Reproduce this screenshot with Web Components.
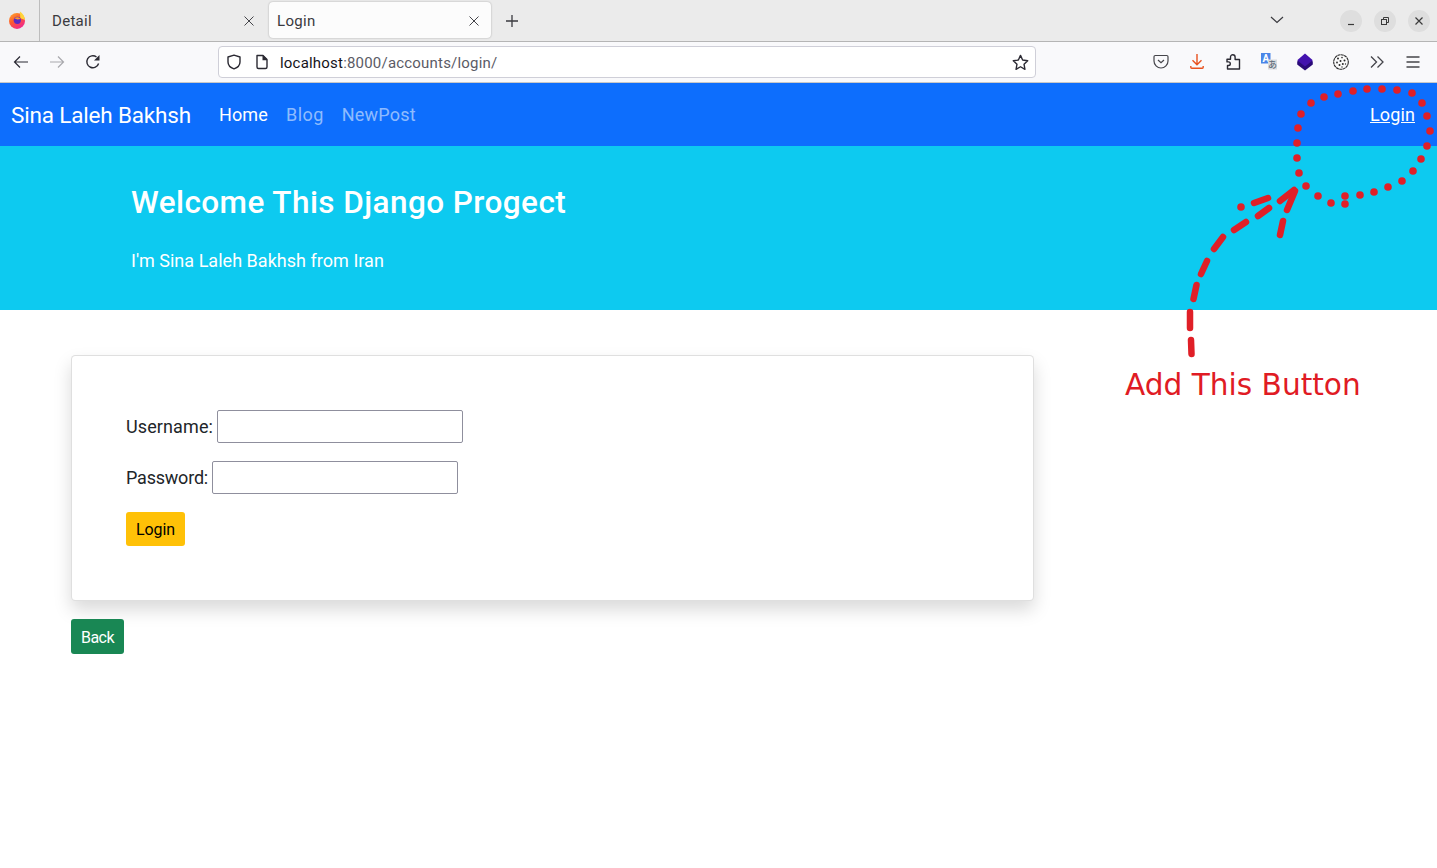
<!doctype html>
<html lang="en">
<head>
<meta charset="utf-8">
<title>Login</title>
<style>
  html, body { margin: 0; padding: 0; background: #fff; }
  body { font-family: Roboto, "Noto Sans", sans-serif; color: #212529; }
</style>
</head>
<body>
<login-app></login-app>

<script>
// inline icons, all drawn on a 16x16 box
const ICONS = {
  back: '<path d="M15 8H1.5M7 2.5 1.5 8 7 13.5" fill="none" stroke="currentColor" stroke-width="1.2"/>',
  forward: '<path d="M1 8h13.5M9 2.5 14.5 8 9 13.5" fill="none" stroke="currentColor" stroke-width="1.2"/>',
  reload: '<path d="M13.6 9.5A6 6 0 1 1 11.5 3" fill="none" stroke="currentColor" stroke-width="1.4"/><path d="M14.5 1v5.5H9z" fill="currentColor"/>',
  shield: '<path d="M8 1.2 14 3v5c0 3.4-2.6 5.7-6 6.9C4.6 13.7 2 11.4 2 8V3z" fill="none" stroke="currentColor" stroke-width="1.4" stroke-linejoin="round"/>',
  page: '<path d="M3 1.5h6l4 4V13a1.5 1.5 0 0 1-1.5 1.5h-7A1.5 1.5 0 0 1 3 13z" fill="none" stroke="currentColor" stroke-width="1.4" stroke-linejoin="round"/><path d="M8.5 1.5h1L13 5v1.300H8.500z" fill="currentColor"/>',
  star: '<path d="m8 1.300 2 4.400 4.800.6-3.500 3.300.9 4.800L8 12l-4.200 2.400.9-4.800L1.200 6.300 6 5.700z" fill="none" stroke="currentColor" stroke-width="1.3" stroke-linejoin="round"/>',
  pocket: '<path d="M2.300 1.500h11.400c.7 0 1.300.6 1.300 1.300V7A7 7 0 0 1 1 7V2.800c0-.7.600-1.300 1.300-1.300z" fill="none" stroke="#45454a" stroke-width="1.200"/><path d="M5 6l3 2.800L11 6" fill="none" stroke="#45454a" stroke-width="1.200"/>',
  download: '<path d="M8 0v10.500M3.500 6.200 8 10.700l4.500-4.500" fill="none" stroke="#e8521f" stroke-width="1.400"/><path d="M1.800 12v1.300c0 .5.400.9.900.9h10.600c.5 0 .9-.4.900-.9V12" fill="none" stroke="#e8521f" stroke-width="1.400"/>',
  puzzle: '<path d="M2 5.200h3.500V3a2.300 2.300 0 0 1 4.600 0v2.500h4.400V15H2.500v-3.500h1a1.800 1.800 0 0 0 0-3.600H2z" fill="none" stroke="currentColor" stroke-width="1.400" stroke-linejoin="round"/>',
  translate: '<rect x="0" y="-1" width="9.500" height="10.500" fill="#4a86e8"/><text x="4.750" y="7.800" font-family="Roboto, sans-serif" font-size="10" font-weight="700" fill="#fff" text-anchor="middle">A</text><rect x="7" y="5.500" width="9" height="10" fill="#d9dcdf"/><text x="11.500" y="14" font-family="\'Noto Sans CJK JP\', sans-serif" font-size="9" fill="#4a5a6a" text-anchor="middle">あ</text>',
  layers: '<path d="M.2 7.500 8 2 15.800 7.500v3L8 16.500.2 10.500z" fill="#2a0a78"/><path d="M8 -.5 15.800 6.300 8 12.500 .2 6.300z" fill="#4312ae"/>',
  cookie: '<circle cx="8" cy="8" r="7.300" fill="#fbfbfb" stroke="#2a2a2a" stroke-width="1.100" stroke-dasharray="3 .4"/><g fill="#2a2a2a"><circle cx="5" cy="4.500" r="1"/><circle cx="9" cy="3.600" r=".8"/><circle cx="11.500" cy="6.500" r="1"/><circle cx="7.500" cy="7" r="1"/><circle cx="4" cy="8.500" r=".9"/><circle cx="9.800" cy="10" r="1"/><circle cx="6.500" cy="11" r="1"/><circle cx="12.500" cy="10" r=".7"/><circle cx="9" cy="13" r=".7"/></g>',
  overflow: '<path d="M2 2.500 7.500 8 2 13.500M8.500 2.500 14 8l-5.500 5.500" fill="none" stroke="#45454a" stroke-width="1.300"/>',
  menu: '<path d="M1.500 3h13M1.500 8h13M1.500 13h13" fill="none" stroke="#45454a" stroke-width="1.300"/>',
  close: '<path d="M3.500 3.500l9 9M12.500 3.500l-9 9" fill="none" stroke="currentColor" stroke-width="1"/>',
  plus: '<path d="M8 2v12M2 8h12" fill="none" stroke="currentColor" stroke-width="1.300"/>',
  chevron: '<path d="M2 5l6 5.500L14 5" fill="none" stroke="currentColor" stroke-width="1.200"/>',
  firefox: '<defs><linearGradient id="fx" x1="0" y1="0" x2=".6" y2="1"><stop offset="0" stop-color="#ffb02e"/><stop offset=".5" stop-color="#ff5a2c"/><stop offset="1" stop-color="#f0288c"/></linearGradient></defs><circle cx="8" cy="8.800" r="7.100" fill="url(#fx)"/><path d="M10.500 .5c2.500 1.500 4.500 4 4.600 7.500L11 6.500z" fill="#ffd43a"/><circle cx="8.300" cy="8.300" r="3.200" fill="#5b2bc4"/><path d="M5.500 6.500c2-1.500 4.500-1 5.500.5l-2.500.5z" fill="#ff9a2c"/>'
};

class ToolIcon extends HTMLElement {
  constructor() {
    super();
    this.attachShadow({ mode: 'open' });
  }

  connectedCallback() {
    const size = this.getAttribute('size') || 16;
    this.shadowRoot.innerHTML = `
      <style>
        :host { display: flex; align-items: center; justify-content: center; color: inherit; flex: none; }
        svg { display: block; overflow: visible; }
      </style>
      <svg width="${size}" height="${size}" viewBox="0 0 16 16">${ICONS[this.getAttribute('name')]}</svg>
    `;
  }
}

class BrowserTab extends HTMLElement {
  constructor() {
    super();
    this.attachShadow({ mode: 'open' });
    this.shadowRoot.innerHTML = `
      <style>
        :host {
          display: flex;
          align-items: center;
          box-sizing: border-box;
          height: 36px;
          font-size: 15px;
          letter-spacing: .3px;
          color: #3a3a3f;
        }
        :host([selected]) {
          background: #fcfcfc;
          border-radius: 4px;
          box-shadow: 0 0 2px rgba(0,0,0,.3);
        }
        .label { flex: 1; }
        tool-icon { color: #45454a; }
      </style>
      <span class="label"><slot></slot></span>
      <tool-icon name="close"></tool-icon>
    `;
  }
}

class WindowButton extends HTMLElement {
  constructor() {
    super();
    this.attachShadow({ mode: 'open' });
    const kind = this.getAttribute('kind');
    const glyph = {
      min: '<path d="M3 9.500h6" stroke="currentColor" stroke-width="1.200"/>',
      max: '<path d="M4.500 4V2.500h5v5H8" fill="none" stroke="currentColor"/><rect x="2.500" y="4.500" width="5" height="5" fill="none" stroke="currentColor"/>',
      close: '<path d="M2.500 2.500l7 7M9.500 2.500l-7 7" stroke="currentColor" stroke-width="1.200"/>'
    }[kind];
    this.shadowRoot.innerHTML = `
      <style>
        :host {
          display: flex;
          align-items: center;
          justify-content: center;
          width: 22px;
          height: 22px;
          border-radius: 50%;
          background: #dedede;
          color: #3a3a3a;
        }
      </style>
      <svg width="12" height="12" viewBox="0 0 12 12">${glyph}</svg>
    `;
  }
}

class BrowserTabs extends HTMLElement {
  constructor() {
    super();
    this.attachShadow({ mode: 'open' });
    this.shadowRoot.innerHTML = `
      <style>
        :host {
          display: flex;
          align-items: center;
          box-sizing: border-box;
          height: 42px;
          background: #ebebeb;
          border-bottom: 1px solid #b5b5b5;
        }
        .logo {
          display: flex;
          align-items: center;
          justify-content: center;
          box-sizing: border-box;
          width: 40px;
          height: 41px;
          padding-right: 6px;
          padding-bottom: 1px;
          border-right: 1px solid #bdbdbd;
        }
        .tab-plain { width: 229px; padding: 0 12px; }
        .tab-on { width: 222px; padding: 2px 9px 0 8px; margin-top: -1px; }
        .new { width: 42px; display: flex; justify-content: center; color: #3a3a3f; }
        .spacer { flex: 1; }
        .list { width: 36px; color: #3a3a3f; margin-right: 45px; margin-top: -2px; }
        .win { display: flex; gap: 12px; padding-right: 7px; }
      </style>
      <div class="logo"><tool-icon name="firefox" size="18"></tool-icon></div>
      <browser-tab class="tab-plain">Detail</browser-tab>
      <browser-tab class="tab-on" selected>Login</browser-tab>
      <div class="new"><tool-icon name="plus" size="16"></tool-icon></div>
      <div class="spacer"></div>
      <tool-icon class="list" name="chevron" size="16"></tool-icon>
      <div class="win">
        <window-button kind="min"></window-button>
        <window-button kind="max"></window-button>
        <window-button kind="close"></window-button>
      </div>
    `;
  }
}

class BrowserToolbar extends HTMLElement {
  constructor() {
    super();
    this.attachShadow({ mode: 'open' });
    const btn = (name, cls = '') => `<tool-icon class="btn ${cls}" name="${name}"></tool-icon>`;
    this.shadowRoot.innerHTML = `
      <style>
        :host {
          display: flex;
          align-items: center;
          box-sizing: border-box;
          height: 41px;
          padding: 0 6px 0 3px;
          background: #f9f9fb;
          border-bottom: 1px solid #c8c8c8;
          color: #2b2a33;
        }
        .btn { width: 36px; height: 32px; }
        .off { color: #a9a9ad; }
        .url {
          display: flex;
          align-items: center;
          box-sizing: border-box;
          width: 818px;
          height: 32px;
          margin-left: 107px;
          background: #fff;
          border: 1px solid #cfcfd8;
          border-radius: 4px;
          font-size: 15px;
          letter-spacing: .2px;
        }
        .shield { margin-left: 7px; }
        .page { margin-left: 12px; }
        .addr { margin-left: 10px; padding-top: 1px; flex: 1; white-space: nowrap; color: #5b5b66; }
        .addr b { font-weight: 400; color: #15141a; }
        .star { margin-right: 6px; }
        .right { display: flex; margin-left: auto; }
      </style>
      ${btn('back')}
      ${btn('forward', 'off')}
      ${btn('reload')}
      <div class="url">
        <tool-icon class="shield" name="shield"></tool-icon>
        <tool-icon class="page" name="page"></tool-icon>
        <span class="addr"><b>localhost</b>:8000/accounts/login/</span>
        <tool-icon class="star" name="star" size="17"></tool-icon>
      </div>
      <div class="right">
        ${btn('pocket')}
        ${btn('download')}
        ${btn('puzzle')}
        ${btn('translate')}
        ${btn('layers')}
        ${btn('cookie')}
        ${btn('overflow')}
        ${btn('menu')}
      </div>
    `;
  }
}

class SiteNavbar extends HTMLElement {
  constructor() {
    super();
    this.attachShadow({ mode: 'open' });
    this.shadowRoot.innerHTML = `
      <style>
        :host {
          display: flex;
          align-items: center;
          box-sizing: border-box;
          height: 63px;
          padding: 0 13px 0 11px;
          background: #0d6efd;
          font-size: 18px;
          line-height: 27px;
        }
        .brand { font-size: 22.5px; line-height: 34px; color: #fff; letter-spacing: -.17px; margin-right: 19px; }
        a { display: block; padding: 0 9px; color: rgba(255,255,255,.55); text-decoration: none; }
        .active { color: #fff; letter-spacing: .14px; }
        .blog { letter-spacing: .45px; }
        .post { letter-spacing: .2px; }
        .login { margin-left: auto; color: #fff; text-decoration: underline; letter-spacing: .12px; }
      </style>
      <span class="brand">Sina Laleh Bakhsh</span>
      <a class="active">Home</a>
      <a class="blog">Blog</a>
      <a class="post">NewPost</a>
      <a class="login">Login</a>
    `;
  }
}

class SiteHero extends HTMLElement {
  constructor() {
    super();
    this.attachShadow({ mode: 'open' });
    this.shadowRoot.innerHTML = `
      <style>
        :host {
          display: block;
          box-sizing: border-box;
          height: 164px;
          padding: 38px 131px 0;
          background: #0dcaf0;
          color: #fff;
        }
        h1 { margin: 0 0 25px; font-size: 31.5px; line-height: 38px; font-weight: 500; letter-spacing: .43px; }
        p { margin: 0; font-size: 18px; line-height: 27px; font-weight: 400; letter-spacing: .03px; }
      </style>
      <h1>Welcome This Django Progect</h1>
      <p>I'm Sina Laleh Bakhsh from Iran</p>
    `;
  }
}

class SiteButton extends HTMLElement {
  constructor() {
    super();
    this.attachShadow({ mode: 'open' });
    this.shadowRoot.innerHTML = `
      <style>
        :host {
          display: flex;
          align-items: center;
          box-sizing: border-box;
          width: fit-content;
          height: 35px;
          padding: 0 10px;
          border-radius: 3px;
          font-size: 16px;
          cursor: pointer;
        }
        :host([variant="warning"]) { height: 34px; background: #ffc107; color: #000; letter-spacing: -.09px; }
        :host([variant="success"]) { margin-top: 18px; padding-top: 1px; background: #198754; color: #fff; letter-spacing: -.54px; }
      </style>
      <slot></slot>
    `;
  }
}

class FormField extends HTMLElement {
  constructor() {
    super();
    this.attachShadow({ mode: 'open' });
    const type = this.getAttribute('type') || 'text';
    this.shadowRoot.innerHTML = `
      <style>
        :host { display: flex; align-items: center; gap: 4px; margin-bottom: 18px; font-size: 18px; color: #212529; }
        input {
          box-sizing: border-box;
          width: 246px;
          height: 33px;
          padding: 1px 2px;
          background: #fff;
          border: 1px solid #8f8f9d;
          border-radius: 2px;
        }
      </style>
      <label><slot></slot></label>
      <input type="${type}">
    `;
  }
}

class LoginCard extends HTMLElement {
  constructor() {
    super();
    this.attachShadow({ mode: 'open' });
    this.shadowRoot.innerHTML = `
      <style>
        :host {
          display: block;
          box-sizing: border-box;
          width: 963px;
          padding: 54px;
          background: #fff;
          border: 1px solid rgba(0,0,0,.125);
          border-radius: 4.5px;
          box-shadow: 0 9px 18px rgba(0,0,0,.15);
        }
      </style>
      <slot></slot>
    `;
  }
}

class RedAnnotation extends HTMLElement {
  constructor() {
    super();
    this.attachShadow({ mode: 'open' });
    // points read from the reference, dots of the hand drawn ring
    const dots = [[1299,173],[1297,158],[1297,143],[1298,128],[1301,114],[1311,103],[1324,97],[1338,94],[1353,91],[1367,89],[1382,89],[1397,90],[1412,93],[1422,103],[1427,116],[1430,131],[1427,146],[1421,159],[1413,171],[1402,181],[1388,187],[1374,192],[1360,195],[1345,196],[1345,204],[1331,203],[1318,196],[1306,186],[1241,207]];
    const dashes = [
      'M1190 312v16', 'M1191 340l.5 14', 'M1193.5 299l3-14', 'M1201 274l6-13', 'M1214 249l9-12',
      'M1234 230l12-8', 'M1254 203l14-5', 'M1258 216l11-8', 'M1280 235l3-14', 'M1280 201l14-11', 'M1295 191l-8 19'
    ];
    this.shadowRoot.innerHTML = `
      <style>
        :host { position: absolute; top: 0; left: 0; width: 1437px; height: 868px; pointer-events: none; }
        svg { display: block; }
        text { font-family: "DejaVu Sans", sans-serif; font-size: 29.6px; fill: #e01b24; }
      </style>
      <svg width="1437" height="868" viewBox="0 0 1437 868">
        <g fill="#e01f27">${dots.map(d => `<circle cx="${d[0]}" cy="${d[1]}" r="3.8"/>`).join('')}</g>
        <g fill="none" stroke="#e01f27" stroke-width="6.5" stroke-linecap="round">${dashes.map(d => `<path d="${d}"/>`).join('')}</g>
        <text x="1125" y="395">Add This Button</text>
      </svg>
    `;
  }
}

class LoginApp extends HTMLElement {
  constructor() {
    super();
    this.attachShadow({ mode: 'open' });
    this.shadowRoot.innerHTML = `
      <style>
        :host { display: block; position: relative; width: 1437px; height: 868px; overflow: hidden; background: #fff; }
        main { padding: 45px 0 0 71px; }
        .user { letter-spacing: .11px; }
        .pass { letter-spacing: -.21px; }
      </style>
      <browser-tabs></browser-tabs>
      <browser-toolbar></browser-toolbar>
      <site-navbar></site-navbar>
      <site-hero></site-hero>
      <main>
        <login-card>
          <form-field class="user">Username:</form-field>
          <form-field class="pass" type="password">Password:</form-field>
          <site-button variant="warning">Login</site-button>
        </login-card>
        <site-button variant="success">Back</site-button>
      </main>
      <red-annotation></red-annotation>
    `;
  }
}

customElements.define('tool-icon', ToolIcon);
customElements.define('browser-tab', BrowserTab);
customElements.define('window-button', WindowButton);
customElements.define('browser-tabs', BrowserTabs);
customElements.define('browser-toolbar', BrowserToolbar);
customElements.define('site-navbar', SiteNavbar);
customElements.define('site-hero', SiteHero);
customElements.define('site-button', SiteButton);
customElements.define('form-field', FormField);
customElements.define('login-card', LoginCard);
customElements.define('red-annotation', RedAnnotation);
customElements.define('login-app', LoginApp);
</script>
</body>
</html>
